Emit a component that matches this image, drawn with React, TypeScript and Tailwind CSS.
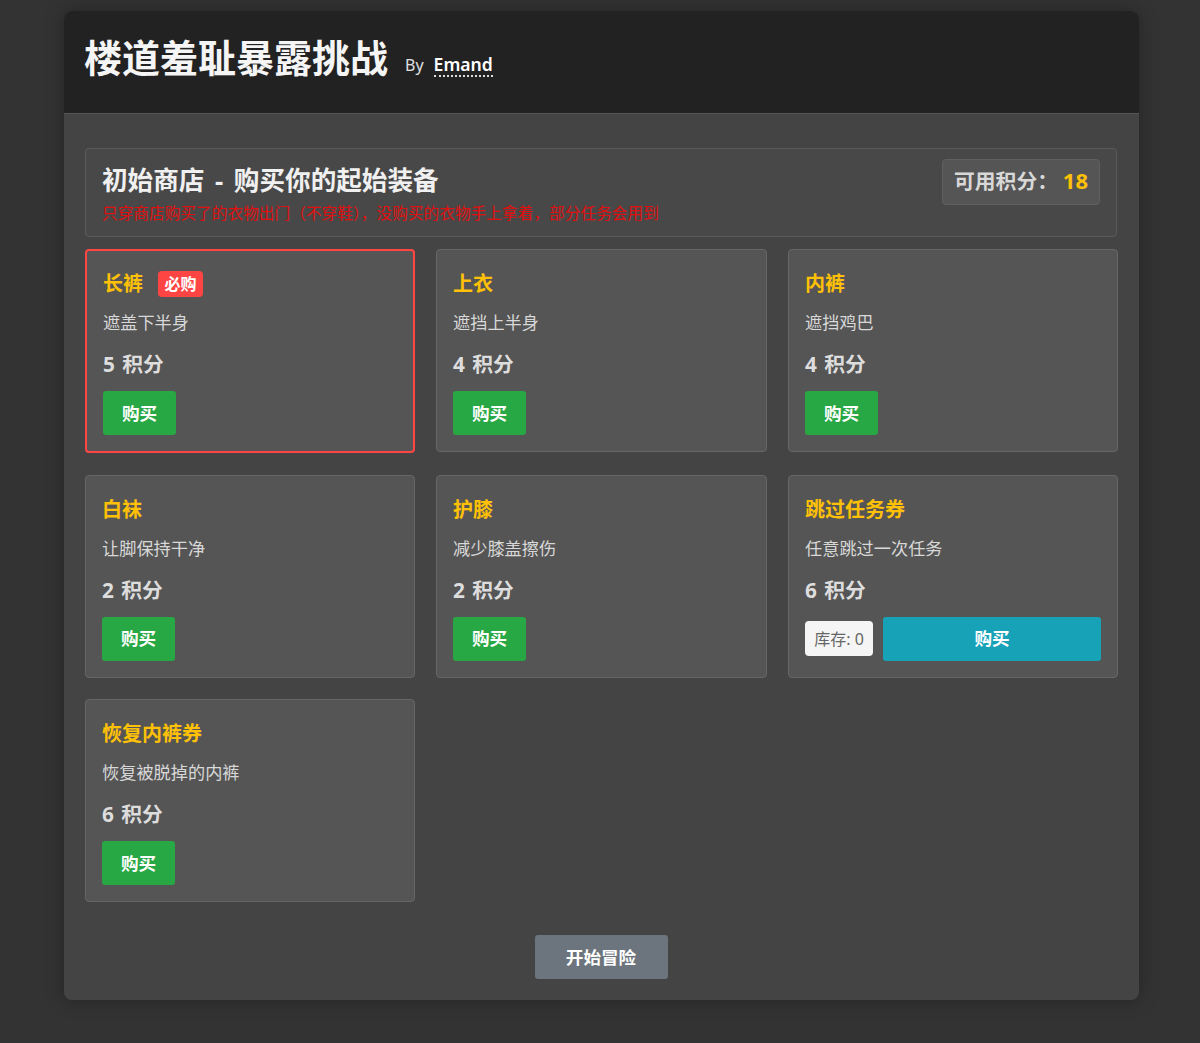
const font = { fontFamily: '"Noto Sans", "Noto Sans CJK SC", sans-serif' }

const items = [
  { name: "长裤", desc: "遮盖下半身", price: 5, required: true },
  { name: "上衣", desc: "遮挡上半身", price: 4 },
  { name: "内裤", desc: "遮挡鸡巴", price: 4 },
  { name: "白袜", desc: "让脚保持干净", price: 2 },
  { name: "护膝", desc: "减少膝盖擦伤", price: 2 },
  { name: "跳过任务券", desc: "任意跳过一次任务", price: 6, stock: 0 },
  { name: "恢复内裤券", desc: "恢复被脱掉的内裤", price: 6 },
]

export default function App() {
  return (
    <div style={font} className="min-h-[1043px] bg-[#333] pt-[11px] text-[#e0e0e0]">
      <div className="ml-[64px] w-[1075px] overflow-hidden rounded-lg bg-[#444] shadow-[0_0_20px_rgba(0,0,0,0.3)]">
        <header className="flex h-[103px] items-center border-b border-[#555] bg-[#222] pb-[10px] pl-[20px]">
          <h1 className="text-[38px] leading-none font-bold text-[#f5f5f5]">楼道羞耻暴露挑战</h1>
          <span className="mt-[16px] ml-[17px] text-[16px] text-[#e0e0e0]">By</span>
          <span className="mt-[16px] ml-[10px] border-b-2 border-dotted border-[#ddd] text-[17.6px] leading-[22px] font-semibold text-white">Emand</span>
        </header>

        <main className="pt-[34px] pr-[22px] pb-[21px] pl-[21px]">
          <div className="mb-[12px] flex h-[89px] justify-between rounded border border-[#5a5a5a] bg-[#484848] px-[16px]">
            <div className="mt-[14px]">
              <h2 className="text-[25.6px] leading-[36px] font-bold [word-spacing:4px] text-[#f0f0f0]">初始商店 - 购买你的起始装备</h2>
              <p className="mt-[3px] text-[15.7px] leading-[22px] text-[#e01010]">只穿商店购买了的衣物出门（不穿鞋），没购买的衣物手上拿着，部分任务会用到</p>
            </div>
            <div className="mt-[10px] flex h-[46px] w-[158px] items-center justify-between rounded border border-[#606060] bg-[#555] px-[11px] text-[20.8px] font-bold">
              <span className="text-[#d8d8d8]">可用积分：</span>
              <span className="-mt-[4px] text-[22px] text-[#ffc107]">18</span>
            </div>
          </div>

          <div className="grid grid-cols-[330px_331px_330px] gap-x-[21px] gap-y-[21.5px]">
            {items.map((item) => (
              <div
                key={item.name}
                className={
                  item.required
                    ? "h-[204px] rounded border-2 border-[#ff4444] bg-[#555] px-[16px] pt-[17px]"
                    : "h-[203px] rounded border border-[#666] bg-[#555] px-[16px] pt-[18px]"
                }
              >
                <div className="flex h-[32px] items-center">
                  <h3 className="text-[20px] leading-[32px] font-bold text-[#ffc107]">{item.name}</h3>
                  {item.required && (
                    <span className="ml-[15px] flex h-[26px] w-[45px] items-center justify-center rounded bg-[#ff4444] text-[16px] font-bold text-white">必购</span>
                  )}
                </div>
                <p className="mt-[11px] text-[17.2px] leading-[24px] text-[#d8d8d8]">{item.desc}</p>
                <p className="mt-[14px] text-[20.8px] leading-[30px] font-bold [word-spacing:2px] text-[#dddddd]">{item.price} 积分</p>
                <div className="mt-[12px] flex items-center gap-[10px]">
                  {item.stock !== undefined && (
                    <span className="flex h-[35px] w-[68px] items-center justify-center rounded bg-[#f5f5f5] text-[16px] text-[#666]">库存: {item.stock}</span>
                  )}
                  <button
                    className={
                      item.stock !== undefined
                        ? "h-[44px] flex-1 rounded-[3px] bg-[#17a2b8] text-[17.6px] font-bold text-white"
                        : "h-[44px] w-[73px] rounded-[3px] bg-[#28a745] text-[17.6px] font-bold text-white"
                    }
                  >
                    购买
                  </button>
                </div>
              </div>
            ))}
          </div>

          <div className="mt-[33px] flex justify-center">
            <button className="h-[44px] w-[133px] rounded-[3px] bg-[#6c757d] text-[17.6px] font-bold text-white">开始冒险</button>
          </div>
        </main>
      </div>
    </div>
  )
}
